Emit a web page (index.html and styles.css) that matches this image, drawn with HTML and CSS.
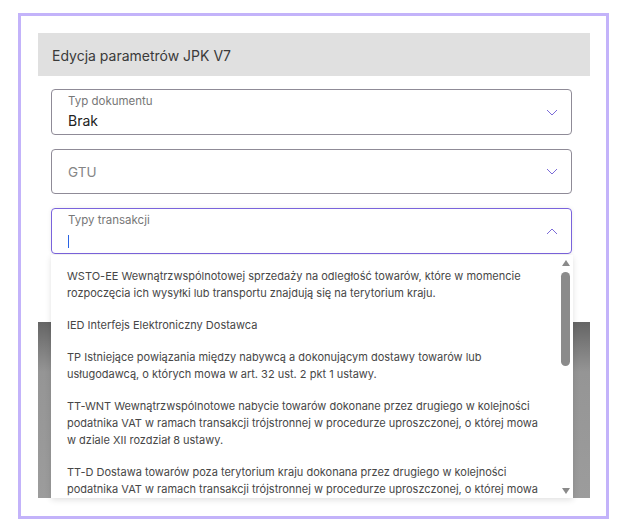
FILE: index.html
```html
<!DOCTYPE html>
<html lang="pl">
<head>
    <meta charset="UTF-8">
    <meta name="viewport" content="width=device-width, initial-scale=1.0">
    <title>Edycja parametrów JPK V7</title>
    <link rel="stylesheet" href="styles.css">
</head>
<body>
    <div class="frame">
        <div class="panel">
            <div class="header">Edycja parametrów JPK V7</div>

            <div class="fields">
                <div class="field">
                    <div class="field-text">
                        <span class="label">Typ dokumentu</span>
                        <span class="value">Brak</span>
                    </div>
                    <svg class="chevron" width="12" height="7" viewBox="0 0 12 7"><path d="M1 1l5 5 5-5" fill="none" stroke="#7b6bd8" stroke-width="1"/></svg>
                </div>

                <div class="field field-short">
                    <div class="field-text">
                        <span class="placeholder">GTU</span>
                    </div>
                    <svg class="chevron" width="12" height="7" viewBox="0 0 12 7"><path d="M1 1l5 5 5-5" fill="none" stroke="#7b6bd8" stroke-width="1"/></svg>
                </div>

                <div class="select-wrap">
                    <div class="field field-focused">
                        <div class="field-text">
                            <span class="label">Typy transakcji</span>
                            <span class="value"><span class="caret"></span></span>
                        </div>
                        <svg class="chevron" width="12" height="7" viewBox="0 0 12 7"><path d="M1 6l5-5 5 5" fill="none" stroke="#7b6bd8" stroke-width="1"/></svg>
                    </div>

                    <div class="dropdown">
                        <ul class="options">
                            <li>WSTO-EE Wewnątrzwspólnotowej sprzedaży na odległość towarów, które w momencie rozpoczęcia ich wysyłki lub transportu znajdują się na terytorium kraju.</li>
                            <li>IED Interfejs Elektroniczny Dostawca</li>
                            <li>TP Istniejące powiązania między nabywcą a dokonującym dostawy towarów lub usługodawcą, o których mowa w art. 32 ust. 2 pkt 1 ustawy.</li>
                            <li>TT-WNT Wewnątrzwspólnotowe nabycie towarów dokonane przez drugiego w kolejności podatnika VAT w ramach transakcji trójstronnej w procedurze uproszczonej, o której mowa w dziale XII rozdział 8 ustawy.</li>
                            <li>TT-D Dostawa towarów poza terytorium kraju dokonana przez drugiego w kolejności podatnika VAT w ramach transakcji trójstronnej w procedurze uproszczonej, o której mowa w dziale XII rozdział 8 ustawy.</li>
                        </ul>
                        <div class="scrollbar">
                            <span class="arrow-up"></span>
                            <span class="thumb"></span>
                            <span class="track"></span>
                            <span class="arrow-down"></span>
                        </div>
                    </div>
                </div>
            </div>

            <div class="backdrop"></div>
        </div>
    </div>
</body>
</html>
```

FILE: styles.css
```css
body {
    margin: 0;
    padding: 0;
    background-color: #fff;
    font-family: Inter, "Noto Sans", sans-serif;
    color: #333;
}
.frame {
    width: 585px;
    height: 500px;
    margin: 13px 0 0 18px;
    border: 3px solid #c3b3fa;
}
.panel {
    padding: 17px 16px 18px 17px;
}
.header {
    height: 43px;
    padding-left: 14px;
    background-color: #e0e0e0;
    font-size: 14px;
    line-height: 45px;
    color: #3a3a3a;
}
.fields {
    margin-top: 13px;
    padding: 0 18px 0 13px;
    display: flex;
    flex-direction: column;
    gap: 14px;
}
.field {
    height: 46px;
    box-sizing: border-box;
    border: 1px solid #8f8b97;
    border-radius: 4px;
    display: flex;
    align-items: center;
    padding: 0 13px 0 16px;
}
.field-short {
    height: 45px;
}
.field-focused {
    border-color: #7a63dc;
    box-shadow: 0 0 4px rgba(0, 0, 0, 0.08);
}
.field-text {
    flex: 1;
    display: flex;
    flex-direction: column;
    padding-top: 1px;
}
.label {
    font-size: 11.5px;
    line-height: 16px;
    color: #777;
}
.value {
    font-size: 14px;
    line-height: 22px;
    height: 22px;
    margin-top: 1px;
    color: #222;
    display: flex;
    align-items: center;
}
.placeholder {
    font-size: 13.5px;
    color: #858585;
}
.caret {
    width: 1px;
    height: 13px;
    background-color: #2a63e4;
    margin-top: 3px;
}
.chevron {
    display: block;
}
.select-wrap {
    position: relative;
}
.dropdown {
    position: absolute;
    top: 47px;
    left: 0;
    width: 522px;
    height: 243px;
    background-color: #fff;
    box-shadow: 0 2px 6px rgba(0, 0, 0, 0.12);
    display: flex;
    overflow: hidden;
    z-index: 2;
}
.options {
    flex: 1;
    list-style: none;
    margin: 0;
    padding: 5px 0 0;
}
.options li {
    padding: 7.5px 12px 7.5px 16px;
    font-size: 11px;
    line-height: 17px;
    color: #474747;
}
.options li:first-child {
    padding-top: 8px;
}
.scrollbar {
    width: 15px;
    display: flex;
    flex-direction: column;
    align-items: center;
    padding: 5px 0 4px;
    box-sizing: border-box;
}
.arrow-up,
.arrow-down {
    width: 0;
    height: 0;
    border-left: 4.5px solid transparent;
    border-right: 4.5px solid transparent;
}
.arrow-up {
    border-bottom: 6px solid #8a8a8a;
}
.arrow-down {
    border-top: 6px solid #8a8a8a;
}
.thumb {
    width: 9px;
    height: 94px;
    margin-top: 6px;
    border-radius: 5px;
    background-color: #8b8b8b;
}
.track {
    flex: 1;
}
.backdrop {
    height: 176px;
    margin-top: 68px;
    background: linear-gradient(#656565, #959595 50px, #9c9c9c);
}
```
